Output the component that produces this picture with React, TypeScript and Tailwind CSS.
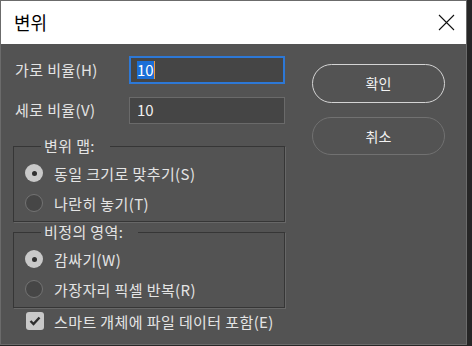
import React from 'react';

const font = { fontFamily: '"Noto Sans CJK KR", "Noto Sans", sans-serif' };

function Radio({ checked, label }: { checked?: boolean; label: string }) {
  return (
    <div className="flex h-[30px] items-center">
      {checked ? (
        <span className="flex h-[18px] w-[18px] items-center justify-center rounded-full bg-[#c9c9c9]">
          <span className="h-[5px] w-[5px] rounded-full bg-[#2f2f2f]" />
        </span>
      ) : (
        <span className="h-[18px] w-[18px] rounded-full border-[1.5px] border-[#737373] bg-[#464646]" />
      )}
      <span className="ml-[11px] text-[15px] leading-none tracking-[0.4px] text-[#e4e4e4]">{label}</span>
    </div>
  );
}

function Group({ title, children, className }: { title: string; children: React.ReactNode; className?: string }) {
  return (
    <fieldset className={'border border-[#363636] pb-[3px] pl-[11px] shadow-[1px_1px_0_#676767] ' + (className ?? '')}>
      <legend className="ml-[16px] h-[20px] pl-[3px] pr-[15px] text-[15px] leading-[20px] tracking-[0.4px] text-[#e4e4e4]">{title}</legend>
      <div className="pt-[2px]">{children}</div>
    </fieldset>
  );
}

export default function App() {
  return (
    <div className="h-[346px] w-[472px] bg-[#262626]" style={font}>
      <div className="flex h-[345px] w-[467px] flex-col border border-[#6b6b6b] bg-[#535353]">
        <div className="flex h-[43px] items-center justify-between bg-white pl-[13px] pr-[11px]">
          <span className="text-[18px] text-black">변위</span>
          <svg width="17" height="17" viewBox="0 0 17 17">
            <path d="M1 1 L16 16 M16 1 L1 16" stroke="#111" strokeWidth="1.1" />
          </svg>
        </div>

        <div className="flex pl-[12px] pt-[12px]">
          <div className="flex w-[272px] flex-col">
            <div className="flex h-[28px] items-center">
              <span className="pl-[2px] text-[15px] tracking-[0.4px] text-[#e4e4e4]">가로 비율(H)</span>
              <div className="ml-auto flex h-[28px] w-[156px] items-center border-2 border-[#2d78d6] bg-[#454545] pl-[6px]">
                <span className="bg-[#1b6fd8] text-[15px] leading-[18px] text-white">10</span>
                <span className="h-[18px] w-[1px] bg-[#f29a3a]" />
              </div>
            </div>
            <div className="mt-[13px] flex h-[27px] items-center">
              <span className="pl-[2px] text-[15px] tracking-[0.4px] text-[#e4e4e4]">세로 비율(V)</span>
              <div className="ml-auto flex h-[27px] w-[156px] items-center border border-[#6a6a6a] bg-[#454545] pl-[7px]">
                <span className="text-[15px] text-[#f0f0f0]">10</span>
              </div>
            </div>

            <Group title="변위 맵:" className="mt-[12px]">
              <Radio checked label="동일 크기로 맞추기(S)" />
              <Radio label="나란히 놓기(T)" />
            </Group>

            <Group title="비정의 영역:">
              <Radio checked label="감싸기(W)" />
              <Radio label="가장자리 픽셀 반복(R)" />
            </Group>

            <div className="mt-[4px] flex items-center pl-[13px]">
              <span className="flex h-[18px] w-[18px] items-center justify-center rounded-[3px] bg-[#c9c9c9]">
                <svg width="12" height="10" viewBox="0 0 12 10">
                  <path d="M1.5 5 L4.5 8 L10.5 1.5" fill="none" stroke="#2e2e2e" strokeWidth="2.4" />
                </svg>
              </span>
              <span className="ml-[10px] text-[15px] leading-none tracking-[0.4px] text-[#e4e4e4]">스마트 개체에 파일 데이터 포함(E)</span>
            </div>
          </div>

          <div className="ml-[27px] flex flex-col pt-[8px]">
            <button className="h-[39px] w-[133px] rounded-full border-[1.5px] border-[#d4d4d4] text-[14px] text-[#f2f2f2]">
              확인
            </button>
            <button className="mt-[14px] h-[38px] w-[133px] rounded-full border-[1.5px] border-[#717171] text-[14px] text-[#f2f2f2]">
              취소
            </button>
          </div>
        </div>
      </div>
    </div>
  );
}
